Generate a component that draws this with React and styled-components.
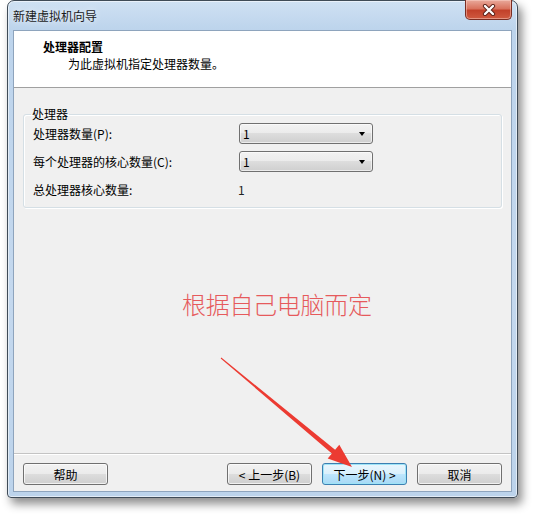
import React from "react";
import styled, { createGlobalStyle, css } from "styled-components";

const Global = createGlobalStyle`
  html, body { margin: 0; padding: 0; background: #ffffff; }
  body { font-family: "Noto Sans CJK SC", "Noto Sans", sans-serif; font-size: 12px; color: #000; }
  * { box-sizing: border-box; }
`;

const Page = styled.div`
  position: relative;
  width: 548px;
  height: 525px;
  padding-left: 7px;
`;

const Window = styled.div`
  width: 511px;
  height: 498px;
  display: flex;
  flex-direction: column;
  padding: 0 5px 5px 5px;
  border: 1px solid #3f4b57;
  border-radius: 7px 7px 4px 4px;
  background: linear-gradient(180deg, #cfe1f3 0px, #bdd4ec 28px, #c4d8ee 60%, #bcd3eb 100%);
  box-shadow: 4px 6px 10px rgba(0, 0, 0, 0.45), inset 0 0 0 1px rgba(255, 255, 255, 0.55);
`;

const TitleBar = styled.div`
  height: 29px;
  display: flex;
  justify-content: space-between;
  align-items: flex-start;
`;

const Title = styled.span`
  margin-top: 6px;
  font-size: 12px;
  line-height: 17px;
  color: #1b1b1b;
  text-shadow: 0 0 6px rgba(255, 255, 255, 0.9);
`;

const CloseButton = styled.div`
  width: 47px;
  height: 20px;
  margin-top: -1px;
  display: flex;
  align-items: center;
  justify-content: center;
  border: 1px solid #7a2d22;
  border-top: none;
  border-radius: 0 0 5px 5px;
  background: linear-gradient(180deg, #e9a99b 0%, #d9735e 45%, #c2412a 55%, #cf5a40 100%);
  box-shadow: inset 0 0 0 1px rgba(255, 220, 210, 0.45);
`;

const Client = styled.div`
  flex: 1;
  display: flex;
  flex-direction: column;
  background: #f0f0f0;
  border: 1px solid #8ea4bd;
`;

const Header = styled.div`
  height: 57px;
  background: #ffffff;
  border-bottom: 1px solid #a0a0a0;
  padding: 7px 0 0 29px;
`;

const HeaderTitle = styled.div`
  font-weight: 700;
  font-size: 12px;
  line-height: 17px;
`;

const HeaderSub = styled.div`
  padding-left: 25px;
  font-size: 12px;
  line-height: 17px;
`;

const Body = styled.div`
  flex: 1;
  display: flex;
  flex-direction: column;
  padding: 0 9px;
`;

const Group = styled.fieldset`
  margin: 18px 0 0 0;
  padding: 1px 9px 7px 9px;
  border: 1px solid #d5dfe5;
  border-radius: 3px;
  box-shadow: inset 1px 1px 0 #ffffff, 1px 1px 0 #ffffff;
  display: grid;
  grid-template-columns: 206px 134px;
  row-gap: 7px;
  align-items: center;
`;

const Legend = styled.legend`
  padding: 0 1px;
  margin-left: -2px;
  font-size: 12px;
  line-height: 16px;
`;

const Label = styled.span`
  font-size: 12px;
  line-height: 21px;
`;

const Value = styled.span`
  margin-left: -1px;
  font-size: 12px;
  line-height: 21px;
  color: #222;
`;

const Combo = styled.div`
  height: 21px;
  display: flex;
  align-items: center;
  justify-content: space-between;
  padding: 0 7px 0 3px;
  border: 1px solid #707070;
  border-radius: 3px;
  background: linear-gradient(180deg, #f2f2f2 0%, #ebebeb 50%, #dddddd 50%, #cfcfcf 100%);
  box-shadow: inset 0 0 0 1px rgba(255, 255, 255, 0.6);
  font-size: 12px;
`;

const Caret = styled.span`
  width: 0;
  height: 0;
  border-left: 3.5px solid transparent;
  border-right: 3.5px solid transparent;
  border-top: 4px solid #000;
`;

const Annotation = styled.div`
  margin: 81px 0 0 159px;
  font-size: 24px;
  font-weight: 300;
  line-height: 30px;
  letter-spacing: -0.3px;
  color: #e65a5c;
`;

const Footer = styled.div`
  display: flex;
  align-items: center;
  gap: 10px;
  padding: 9px 9px 6px 9px;
  border-top: 1px solid #c4c4c4;
  box-shadow: inset 0 1px 0 #ffffff;
`;

const Spacer = styled.div`
  flex: 1;
`;

const Button = styled.div`
  width: 85px;
  height: 22px;
  display: flex;
  align-items: center;
  justify-content: center;
  border: 1px solid #707070;
  border-radius: 3px;
  background: linear-gradient(180deg, #f2f2f2 0%, #ebebeb 50%, #dddddd 50%, #cfcfcf 100%);
  box-shadow: inset 0 0 0 1px rgba(255, 255, 255, 0.7);
  font-size: 12px;
  ${(p) =>
    p.$default &&
    css`
      border-color: #3c7fb1;
      background: linear-gradient(180deg, #eaf6fd 0%, #d9f0fc 50%, #bee6fd 50%, #a7d9f5 100%);
      box-shadow: inset 0 0 0 1px #9ee4f7;
    `}
`;

const ArrowLayer = styled.svg`
  position: absolute;
  left: 0;
  top: 0;
  pointer-events: none;
`;

export default function App() {
  return (
    <Page>
      <Global />
      <Window>
        <TitleBar>
          <Title>新建虚拟机向导</Title>
          <CloseButton>
            <svg width="14" height="12" viewBox="0 0 14 12">
              <path d="M3 2 L11 10 M11 2 L3 10" stroke="#5a2018" strokeWidth="4.2" strokeLinecap="round" />
              <path d="M3 2 L11 10 M11 2 L3 10" stroke="#ffffff" strokeWidth="2.4" strokeLinecap="round" />
            </svg>
          </CloseButton>
        </TitleBar>
        <Client>
          <Header>
            <HeaderTitle>处理器配置</HeaderTitle>
            <HeaderSub>为此虚拟机指定处理器数量。</HeaderSub>
          </Header>
          <Body>
            <Group>
              <Legend>处理器</Legend>
              <Label>处理器数量(P):</Label>
              <Combo>
                <span>1</span>
                <Caret />
              </Combo>
              <Label>每个处理器的核心数量(C):</Label>
              <Combo>
                <span>1</span>
                <Caret />
              </Combo>
              <Label>总处理器核心数量:</Label>
              <Value>1</Value>
            </Group>
            <Annotation>根据自己电脑而定</Annotation>
          </Body>
          <Footer>
            <Button>帮助</Button>
            <Spacer />
            <Button>&lt; 上一步(B)</Button>
            <Button $default>下一步(N) &gt;</Button>
            <Button>取消</Button>
          </Footer>
        </Client>
      </Window>
      <ArrowLayer width="548" height="525" viewBox="0 0 548 525">
        <polygon
          points="221.3,357.6 335.1,449.7 339.3,444.7 352,467 327.7,458.5 331.9,453.5 220.7,358.4"
          fill="#ec3b32"
        />
      </ArrowLayer>
    </Page>
  );
}
